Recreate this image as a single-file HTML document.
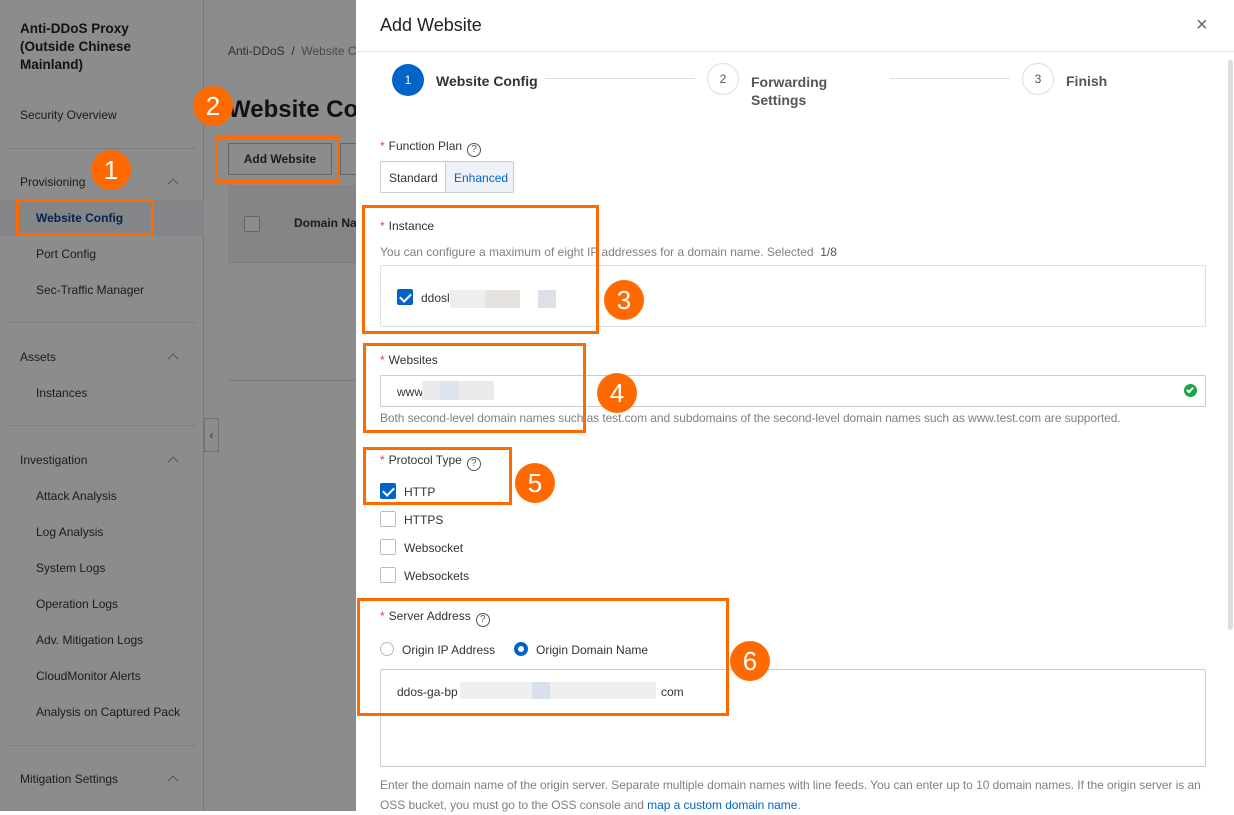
<!DOCTYPE html>
<html><head><meta charset="utf-8"><style>
*{margin:0;padding:0;box-sizing:border-box}
body{width:1234px;height:811px;overflow:hidden;font-family:"Liberation Sans",sans-serif;font-size:12px;color:#333;position:relative;background:#fff}
.a{position:absolute;white-space:nowrap}
.sb{left:0;top:0;width:204px;height:811px;background:#fff;border-right:1px solid #ddd}
.ov{left:0;top:0;width:356px;height:811px;background:rgba(0,0,0,0.45)}
.sbt{font-size:12px;color:#333}
.hr{height:1px;background:#e5e5e5;left:8px;width:188px}
.chev{width:8px;height:8px;border-left:1.5px solid #999;border-top:1.5px solid #999;transform:rotate(45deg)}
.ob{border:3px solid #ff6a00}
.oc{width:40px;height:40px;border-radius:50%;background:#ff6a00;color:#fff;font-size:26px;text-align:center;line-height:40px}
.req{color:#e5443a;margin-right:4px}
.q{display:inline-block;width:14px;height:14px;border:1px solid #555;border-radius:50%;font-size:10px;text-align:center;line-height:12px;margin-left:5px;vertical-align:-2px;color:#555}
.cb{width:16px;height:16px;border:1px solid #bbb;border-radius:2px;background:#fff}
.cbc{background:#0064c8;border-color:#0064c8}
.cbc:after{content:"";position:absolute;left:4px;top:1px;width:5px;height:9px;border-right:2px solid #fff;border-bottom:2px solid #fff;transform:rotate(45deg)}
.lab{font-size:12px;color:#333}
.gray{color:#808080}
</style></head><body>
<div class="a sb"></div>
<div class="a" style="left:20px;top:20px;font-size:13.5px;font-weight:bold;line-height:18px;color:#222">Anti-DDoS Proxy<br>(Outside Chinese<br>Mainland)</div>
<div class="a sbt" style="left:20px;top:108px">Security Overview</div>
<div class="a hr" style="top:148px"></div>
<div class="a sbt" style="left:20px;top:175px">Provisioning</div>
<div class="a chev" style="left:169px;top:180px"></div>
<div class="a" style="left:0;top:200px;width:204px;height:36px;background:#eef2f8"></div>
<div class="a" style="left:36px;top:211px;font-size:12px;font-weight:bold;color:#0a3f8a">Website Config</div>
<div class="a sbt" style="left:36px;top:247px">Port Config</div>
<div class="a sbt" style="left:36px;top:283px">Sec-Traffic Manager</div>
<div class="a hr" style="top:322px"></div>
<div class="a sbt" style="left:20px;top:350px">Assets</div>
<div class="a chev" style="left:169px;top:355px"></div>
<div class="a sbt" style="left:36px;top:386px">Instances</div>
<div class="a hr" style="top:425px"></div>
<div class="a sbt" style="left:20px;top:453px">Investigation</div>
<div class="a chev" style="left:169px;top:458px"></div>
<div class="a sbt" style="left:36px;top:489px">Attack Analysis</div>
<div class="a sbt" style="left:36px;top:525px">Log Analysis</div>
<div class="a sbt" style="left:36px;top:561px">System Logs</div>
<div class="a sbt" style="left:36px;top:597px">Operation Logs</div>
<div class="a sbt" style="left:36px;top:633px">Adv. Mitigation Logs</div>
<div class="a sbt" style="left:36px;top:669px">CloudMonitor Alerts</div>
<div class="a sbt" style="left:36px;top:705px;width:144px;overflow:hidden">Analysis on Captured Packets</div>
<div class="a hr" style="top:745px"></div>
<div class="a sbt" style="left:20px;top:772px">Mitigation Settings</div>
<div class="a chev" style="left:169px;top:777px"></div>
<div class="a" style="left:228px;top:44px;font-size:12px;color:#555">Anti-DDoS &nbsp;/&nbsp; <span style="color:#888">Website Config</span></div>
<div class="a" style="left:228px;top:96px;font-size:24px;font-weight:bold;color:#222">Website Config</div>
<div class="a" style="left:228px;top:143px;width:104px;height:32px;border:1px solid #bbb;background:#fff;font-size:12px;font-weight:bold;text-align:center;line-height:30px">Add Website</div>
<div class="a" style="left:340px;top:143px;width:30px;height:32px;border:1px solid #bbb;background:#fff"></div>
<div class="a" style="left:228px;top:185px;width:130px;height:78px;background:#f2f2f2;border-bottom:1px solid #ddd"></div>
<div class="a cb" style="left:244px;top:216px"></div>
<div class="a" style="left:294px;top:216px;font-size:12px;font-weight:bold">Domain Name</div>
<div class="a" style="left:228px;top:380px;width:130px;height:1px;background:#ddd"></div>
<div class="a" style="left:204px;top:418px;width:15px;height:34px;border:1px solid #ccc;background:#fff;font-size:12px;text-align:center;line-height:32px;color:#666">‹</div>
<div class="a ov"></div>
<div class="a ob" style="left:16px;top:199px;width:138px;height:37px"></div>
<div class="a ob" style="left:215px;top:136px;width:125px;height:47px"></div>
<div class="a oc" style="left:91px;top:150px">1</div>
<div class="a oc" style="left:193px;top:86px">2</div>
<div class="a" style="left:356px;top:0;width:878px;height:811px;background:#fff"></div>
<div class="a" style="left:380px;top:15px;font-size:18px;color:#222">Add Website</div>
<div class="a" style="left:1196px;top:14px;font-size:20px;color:#666">×</div>
<div class="a" style="left:356px;top:51px;width:878px;height:1px;background:#e5e5e5"></div>
<div class="a" style="left:1228px;top:60px;width:5px;height:570px;background:#ddd;border-radius:3px"></div>
<div class="a" style="left:392px;top:64px;width:32px;height:32px;border-radius:50%;background:#0064c8;color:#fff;text-align:center;line-height:32px;font-size:12px">1</div>
<div class="a" style="left:436px;top:73px;font-size:14px;font-weight:bold;color:#333">Website Config</div>
<div class="a" style="left:545px;top:78px;width:150px;height:1px;background:#ddd"></div>
<div class="a" style="left:707px;top:63px;width:32px;height:32px;border-radius:50%;border:1px solid #ddd;color:#555;text-align:center;line-height:30px;font-size:12px">2</div>
<div class="a" style="left:751px;top:73px;font-size:14px;font-weight:bold;color:#555;line-height:18px">Forwarding<br>Settings</div>
<div class="a" style="left:890px;top:78px;width:120px;height:1px;background:#ddd"></div>
<div class="a" style="left:1022px;top:63px;width:32px;height:32px;border-radius:50%;border:1px solid #ddd;color:#555;text-align:center;line-height:30px;font-size:12px">3</div>
<div class="a" style="left:1066px;top:73px;font-size:14px;font-weight:bold;color:#555">Finish</div>
<div class="a lab" style="left:380px;top:139px"><span class="req">*</span>Function Plan<span class="q">?</span></div>
<div class="a" style="left:380px;top:161px;width:134px;height:32px;border:1px solid #ccc;border-radius:2px"></div>
<div class="a" style="left:445px;top:162px;width:68px;height:30px;background:#eef2f8;border-left:1px solid #ccc"></div>
<div class="a" style="left:389px;top:171px;font-size:12px">Standard</div>
<div class="a" style="left:454px;top:171px;font-size:12px;color:#0064c8">Enhanced</div>
<div class="a lab" style="left:380px;top:219px"><span class="req">*</span>Instance</div>
<div class="a gray" style="left:380px;top:245px">You can configure a maximum of eight IP addresses for a domain name. Selected &nbsp;<span style="color:#555">1/8</span></div>
<div class="a" style="left:380px;top:265px;width:826px;height:62px;border:1px solid #e0e0e0;border-radius:2px"></div>
<div class="a cb cbc" style="left:397px;top:289px"></div>
<div class="a" style="left:421px;top:291px;font-size:12px">ddosl</div>
<div class="a" style="left:450px;top:290px;width:35px;height:18px;background:#eeeeec"></div>
<div class="a" style="left:485px;top:290px;width:35px;height:18px;background:#e6e2de"></div>
<div class="a" style="left:538px;top:290px;width:18px;height:18px;background:#dde0e8"></div>
<div class="a lab" style="left:380px;top:353px"><span class="req">*</span>Websites</div>
<div class="a" style="left:380px;top:375px;width:826px;height:32px;border:1px solid #ccc;border-radius:2px"></div>
<div class="a" style="left:397px;top:385px">www</div>
<div class="a" style="left:422px;top:381px;width:72px;height:19px;background:#ebe9ec"></div>
<div class="a" style="left:440px;top:381px;width:18px;height:19px;background:#dbe3ef"></div>
<div class="a" style="left:1184px;top:384px;width:13px;height:13px;border-radius:50%;background:#1ea446"></div>
<div class="a" style="left:1188px;top:386px;width:4px;height:7px;border-right:2px solid #fff;border-bottom:2px solid #fff;transform:rotate(45deg)"></div>
<div class="a gray" style="left:380px;top:411px;letter-spacing:-0.08px">Both second-level domain names such as test.com and subdomains of the second-level domain names such as www.test.com are supported.</div>
<div class="a lab" style="left:380px;top:453px"><span class="req">*</span>Protocol Type<span class="q">?</span></div>
<div class="a cb cbc" style="left:380px;top:483px"></div><div class="a" style="left:404px;top:485px">HTTP</div>
<div class="a cb" style="left:380px;top:511px"></div><div class="a" style="left:404px;top:513px">HTTPS</div>
<div class="a cb" style="left:380px;top:539px"></div><div class="a" style="left:404px;top:541px">Websocket</div>
<div class="a cb" style="left:380px;top:567px"></div><div class="a" style="left:404px;top:569px">Websockets</div>
<div class="a lab" style="left:380px;top:609px"><span class="req">*</span>Server Address<span class="q">?</span></div>
<div class="a" style="left:380px;top:642px;width:14px;height:14px;border:1px solid #bbb;border-radius:50%"></div>
<div class="a" style="left:402px;top:643px">Origin IP Address</div>
<div class="a" style="left:514px;top:642px;width:14px;height:14px;border:4px solid #0064c8;border-radius:50%"></div>
<div class="a" style="left:536px;top:643px">Origin Domain Name</div>
<div class="a" style="left:380px;top:669px;width:826px;height:98px;border:1px solid #ccc;border-radius:2px"></div>
<div class="a" style="left:397px;top:685px">ddos-ga-bp</div>
<div class="a" style="left:460px;top:682px;width:196px;height:17px;background:#f0efef"></div>
<div class="a" style="left:532px;top:682px;width:18px;height:17px;background:#d8e0ee"></div>
<div class="a" style="left:661px;top:685px">com</div>
<div class="a gray" style="left:380px;top:775px;line-height:20px;letter-spacing:-0.05px">Enter the domain name of the origin server. Separate multiple domain names with line feeds. You can enter up to 10 domain names. If the origin server is an<br>OSS bucket, you must go to the OSS console and <span style="color:#0064c8">map a custom domain name</span>.</div>
<div class="a ob" style="left:362px;top:205px;width:237px;height:129px"></div>
<div class="a ob" style="left:363px;top:343px;width:223px;height:90px"></div>
<div class="a ob" style="left:363px;top:447px;width:149px;height:58px"></div>
<div class="a ob" style="left:357px;top:598px;width:372px;height:118px"></div>
<div class="a oc" style="left:604px;top:280px">3</div>
<div class="a oc" style="left:597px;top:373px">4</div>
<div class="a oc" style="left:515px;top:463px">5</div>
<div class="a oc" style="left:730px;top:641px">6</div>
</body></html>
